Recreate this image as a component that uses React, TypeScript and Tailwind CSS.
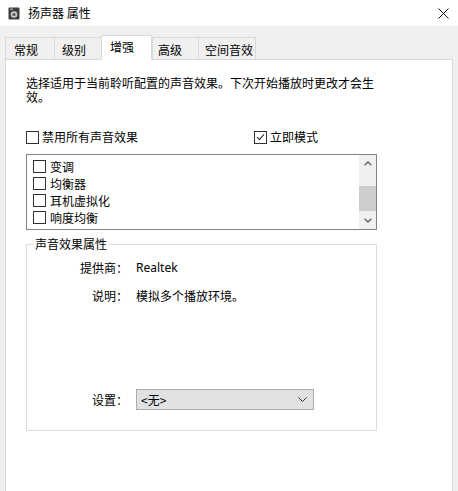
import React from 'react';

const font = { fontFamily: '"Noto Sans CJK SC", "Noto Sans", sans-serif' };

function Box({ checked }: { checked?: boolean }) {
  return (
    <span className="w-[13px] h-[13px] border border-[#333333] bg-white flex items-center justify-center shrink-0">
      {checked && (
        <svg width="9" height="8" viewBox="0 0 9 8">
          <path d="M1 4.2 L3.4 6.6 L8 1.4" fill="none" stroke="#333" strokeWidth="1.1" />
        </svg>
      )}
    </span>
  );
}

const tabs = [
  { label: '常规', w: 'w-[49px]', pl: 'pl-[8px]' },
  { label: '级别', w: 'w-[47px]', pl: 'pl-[7px]' },
  { label: '增强', w: 'w-[51px]', pl: 'pl-[8px]', active: true },
  { label: '高级', w: 'w-[46px]', pl: 'pl-[5px]' },
  { label: '空间音效', w: 'w-[58px]', pl: 'pl-[6px]' },
];

const effects = ['变调', '均衡器', '耳机虚拟化', '响度均衡'];

export default function App() {
  return (
    <div className="w-[458px] h-[491px] bg-[#f0f0f0] overflow-hidden text-[12px] text-black" style={font}>
      {/* title bar */}
      <div className="h-[26px] bg-white flex items-center">
        <svg className="ml-[8px]" width="12" height="13" viewBox="0 0 12 13">
          <rect x="0.5" y="0.5" width="11" height="12" rx="1" fill="#3c3c3c" />
          <circle cx="6" cy="7.5" r="3.3" fill="#c8c8c8" />
          <circle cx="6" cy="7.5" r="1.6" fill="#5a5a5a" />
          <rect x="2" y="1.5" width="3" height="1.5" fill="#9a9a9a" />
        </svg>
        <span className="ml-[8px] leading-[14px]">扬声器 属性</span>
        <svg className="ml-auto mr-[9px]" width="11" height="11" viewBox="0 0 11 11">
          <path d="M0.5 0.5 L10.5 10.5 M10.5 0.5 L0.5 10.5" stroke="#111" strokeWidth="1" />
        </svg>
      </div>

      {/* tabs */}
      <div className="flex items-end pl-[5px] pt-[9px] relative z-10">
        {tabs.map((t) =>
          t.active ? (
            <div
              key={t.label}
              className={`${t.w} ${t.pl} h-[25px] -mb-px bg-white border border-b-0 border-[#d9d9d9] leading-[12px] pt-[5px]`}
            >
              {t.label}
            </div>
          ) : (
            <div
              key={t.label}
              className={`${t.w} ${t.pl} h-[22px] bg-[#f0f0f0] border border-b-0 border-r-0 last:border-r border-[#d9d9d9] leading-[12px] pt-[6px]`}
            >
              {t.label}
            </div>
          )
        )}
      </div>

      {/* panel */}
      <div className="ml-[5px] w-[448px] h-[460px] bg-white border border-[#d9d9d9] pl-[20px] pt-[16px]">
        <p className="w-[415px] leading-[14px]">
          选择适用于当前聆听配置的声音效果。下次开始播放时更改才会生
          <br />
          效。
        </p>

        <div className="flex items-center mt-[26px] h-[14px]">
          <Box />
          <span className="ml-[3px] leading-[12px]">禁用所有声音效果</span>
          <span className="ml-[116px]">
            <Box checked />
          </span>
          <span className="ml-[3px] leading-[12px]">立即模式</span>
        </div>

        {/* effect list */}
        <div className="mt-[10px] w-[351px] h-[76px] border border-[#828282] flex">
          <div className="flex-1 pl-[6px] pt-[3px] flex flex-col">
            {effects.map((e) => (
              <div key={e} className="h-[17px] flex items-center">
                <Box />
                <span className="ml-[4px] leading-[12px]">{e}</span>
              </div>
            ))}
          </div>
          <div className="w-[17px] bg-[#f0f0f0] flex flex-col">
            <div className="h-[17px] flex items-center justify-center">
              <svg width="8" height="5" viewBox="0 0 8 5">
                <path d="M0.7 4.3 L4 1 L7.3 4.3" fill="none" stroke="#606060" strokeWidth="1.3" />
              </svg>
            </div>
            <div className="h-[14px]" />
            <div className="h-[25px] bg-[#cdcdcd]" />
            <div className="flex-1 flex items-center justify-center">
              <svg width="8" height="5" viewBox="0 0 8 5">
                <path d="M0.7 0.7 L4 4 L7.3 0.7" fill="none" stroke="#606060" strokeWidth="1.3" />
              </svg>
            </div>
          </div>
        </div>

        {/* group box */}
        <fieldset className="mt-[7px] w-[351px] h-[194px] border border-[#dcdcdc]">
          <legend className="ml-[6px] px-[2px] leading-[14px]">声音效果属性</legend>
          <div className="flex items-center mt-[10px] h-[14px]">
            <span className="w-[101px] text-right leading-[12px]">提供商：</span>
            <span className="ml-[8px] leading-[12px]" style={{ fontFamily: '"Noto Sans", sans-serif' }}>
              Realtek
            </span>
          </div>
          <div className="flex items-center mt-[14px] h-[14px]">
            <span className="w-[101px] text-right leading-[12px]">说明：</span>
            <span className="ml-[8px] leading-[12px]">模拟多个播放环境。</span>
          </div>
          <div className="flex items-center mt-[86px] h-[21px]">
            <span className="w-[101px] text-right leading-[12px]">设置：</span>
            <div className="ml-[8px] w-[178px] h-[21px] bg-[#e1e1e1] border border-[#adadad] flex items-center pl-[4px] pr-[6px]">
              <span className="leading-[12px]">&lt;无&gt;</span>
              <svg className="ml-auto" width="9" height="5" viewBox="0 0 9 5">
                <path d="M0.5 0.5 L4.5 4.5 L8.5 0.5" fill="none" stroke="#333" strokeWidth="1" />
              </svg>
            </div>
          </div>
        </fieldset>
      </div>
    </div>
  );
}
